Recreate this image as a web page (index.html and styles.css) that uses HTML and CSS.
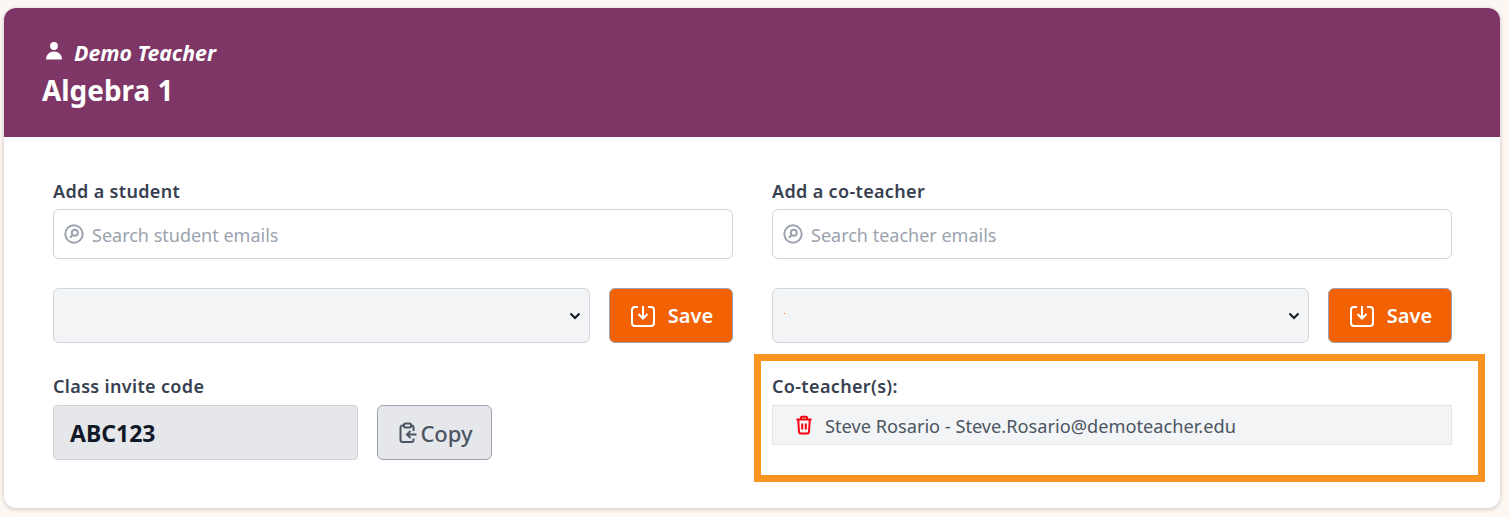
FILE: index.html
```html
<!DOCTYPE html>
<html lang="en">
<head>
<meta charset="utf-8">
<title>Algebra 1</title>
<link rel="stylesheet" href="styles.css">
</head>
<body>
<main class="card">
  <header class="card-head">
    <div class="teacher">
      <svg class="person" viewBox="0 0 20 20" aria-hidden="true"><circle cx="10" cy="5" r="3.900" fill="currentColor"/><path d="M2 18.500c0-5 3.600-8 8-8s8 3 8 8z" fill="currentColor"/></svg>
      <span>Demo Teacher</span>
    </div>
    <h1 class="class-name">Algebra 1</h1>
  </header>
  <div class="card-body">
    <section class="col">
      <label class="label">Add a student</label>
      <div class="search">
        <svg class="search-icon" viewBox="0 0 20 20" aria-hidden="true"><circle cx="10" cy="10" r="8.700"/><circle cx="10.800" cy="8.800" r="3"/><path d="M8.600 11 6 13.700"/></svg>
        <span>Search student emails</span>
      </div>
      <div class="pick-row">
        <div class="select"><svg class="chev" viewBox="0 0 12 8" aria-hidden="true"><path d="M1.500 1.500 6 6l4.500-4.500"/></svg></div>
        <button class="save">
          <svg class="save-icon" viewBox="0 0 26 24" aria-hidden="true"><path d="M8 3H5a3 3 0 0 0-3 3v13a3 3 0 0 0 3 3h16a3 3 0 0 0 3-3V6a3 3 0 0 0-3-3h-3"/><path d="M13 2v12M8.500 10l4.500 4.500 4.500-4.500"/></svg>
          <span>Save</span>
        </button>
      </div>
      <label class="label invite-label">Class invite code</label>
      <div class="invite-row">
        <div class="code">ABC123</div>
        <button class="copy">
          <svg class="copy-icon" viewBox="0 0 20 22" aria-hidden="true"><path d="M6 3.500H4.500a2 2 0 0 0-2 2V18a2 2 0 0 0 2 2h9a2 2 0 0 0 2-2v-1.500M13 3.500h.500a2 2 0 0 1 2 2V9"/><rect x="6" y="1.500" width="7" height="4" rx="1.500"/><path d="M18.500 12.500H9M12.500 9 9 12.500l3.500 3.500"/></svg>
          <span>Copy</span>
        </button>
      </div>
    </section>
    <section class="col">
      <label class="label">Add a co-teacher</label>
      <div class="search">
        <svg class="search-icon" viewBox="0 0 20 20" aria-hidden="true"><circle cx="10" cy="10" r="8.700"/><circle cx="10.800" cy="8.800" r="3"/><path d="M8.600 11 6 13.700"/></svg>
        <span>Search teacher emails</span>
      </div>
      <div class="pick-row">
        <div class="select"><i class="dot"></i><svg class="chev" viewBox="0 0 12 8" aria-hidden="true"><path d="M1.500 1.500 6 6l4.500-4.500"/></svg></div>
        <button class="save">
          <svg class="save-icon" viewBox="0 0 26 24" aria-hidden="true"><path d="M8 3H5a3 3 0 0 0-3 3v13a3 3 0 0 0 3 3h16a3 3 0 0 0 3-3V6a3 3 0 0 0-3-3h-3"/><path d="M13 2v12M8.500 10l4.500 4.500 4.500-4.500"/></svg>
          <span>Save</span>
        </button>
      </div>
      <label class="label invite-label">Co-teacher(s):</label>
      <div class="co-row">
        <svg class="trash" viewBox="0 0 18 20" aria-hidden="true"><path d="M1.500 4.500h15M6 4.500V2.700a1 1 0 0 1 1-1h4a1 1 0 0 1 1 1v1.800M3.200 4.500 4 17a1.800 1.800 0 0 0 1.800 1.500h6.400A1.800 1.800 0 0 0 14 17l.8-12.500M7.200 8.500v6M10.800 8.500v6"/></svg>
        <span class="co-text">Steve Rosario - Steve.Rosario@demoteacher.edu</span>
      </div>
    </section>
    <div class="highlight"></div>
  </div>
</main>
</body>
</html>
```
FILE: styles.css
```css
* { box-sizing: border-box; }
html, body { height: 100%; }
body {
  margin: 0;
  padding: 8px 9px 0 4px;
  background: #fdf7f4;
  font-family: "Noto Sans", "Open Sans", sans-serif;
  color: #374151;
  overflow: hidden;
}
.card {
  width: 1496px;
  height: 500px;
  background: #fff;
  border-radius: 12px;
  box-shadow: 0 1px 4px rgba(0, 0, 0, .22);
  overflow: hidden;
}
.card-head {
  height: 129px;
  background: #7e3667;
  color: #fff;
  padding: 29px 38px 0;
}
.teacher {
  display: flex;
  align-items: center;
  gap: 10px;
  height: 30px;
  padding-left: 2px;
  font-size: 21.300px;
  font-weight: 700;
  font-style: italic;
}
.person { width: 20px; height: 20px; margin-top: -3px; }
.class-name {
  margin: 5px 0 0;
  font-size: 27.900px;
  line-height: 36px;
  font-weight: 700;
}
.card-body {
  position: relative;
  display: grid;
  grid-template-columns: 680px 680px;
  column-gap: 39px;
  padding: 40px 49px 0;
}
.col { min-width: 0; }
.label {
  display: block;
  height: 32px;
  font-size: 18px;
  line-height: 28px;
  font-weight: 600;
  letter-spacing: .34px;
  color: #374151;
}
.search {
  display: flex;
  align-items: center;
  gap: 8px;
  height: 50px;
  padding: 2px 0 0 10px;
  border: 1px solid #d1d5db;
  border-radius: 6px;
  background: #fff;
  font-size: 18px;
  color: #9ca3af;
}
.search-icon {
  width: 20px;
  height: 20px;
  margin-top: -3px;
  fill: none;
  stroke: #9ca3af;
  stroke-width: 2;
}
.pick-row {
  display: flex;
  gap: 19px;
  margin-top: 29px;
}
.select {
  position: relative;
  flex: 1;
  height: 55px;
  background: #f3f4f6;
  border: 1px solid #d1d5db;
  border-radius: 6px;
}
.chev {
  position: absolute;
  right: 8px;
  top: 23px;
  width: 12px;
  height: 8px;
  fill: none;
  stroke: #111827;
  stroke-width: 2;
}
.dot {
  position: absolute;
  left: 11px;
  top: 24px;
  width: 1px;
  height: 1px;
  background: #f97316;
}
.save {
  display: flex;
  align-items: center;
  justify-content: center;
  gap: 12px;
  width: 124px;
  height: 55px;
  padding: 0 0 0 1px;
  background: #f26205;
  border: 1px solid #9ca3af;
  border-radius: 6px;
  color: #fff;
  font: 600 20px "Noto Sans", sans-serif;
}
.save-icon {
  width: 26px;
  height: 24px;
  fill: none;
  stroke: #fff;
  stroke-width: 2;
}
.invite-label { margin-top: 29px; height: 33px; }
.invite-row { display: flex; gap: 19px; }
.code {
  display: flex;
  align-items: center;
  width: 305px;
  height: 55px;
  padding: 0 0 0 16px;
  background: #e5e7eb;
  border: 1px solid #d1d5db;
  border-radius: 4px;
  font: 700 23px "Noto Sans", sans-serif;
  color: #111827;
}
.copy {
  display: flex;
  align-items: center;
  justify-content: center;
  gap: 2px;
  width: 115px;
  height: 55px;
  padding: 0 0 0 2px;
  background: #e5e7eb;
  border: 1px solid #9ca3af;
  border-radius: 6px;
  color: #4b5563;
  font: 500 22px "Noto Sans", sans-serif;
}
.copy-icon {
  width: 20px;
  height: 22px;
  fill: none;
  stroke: #4b5563;
  stroke-width: 2;
}
.co-row {
  display: flex;
  align-items: center;
  gap: 12px;
  height: 40px;
  padding-left: 22px;
  background: #f3f4f6;
  border: 1px solid #e5e7eb;
  font-size: 18.200px;
  color: #4b5563;
}
.co-text { padding-top: 1px; }
.trash {
  width: 18px;
  height: 20px;
  margin-top: -1px;
  fill: none;
  stroke: #f5000f;
  stroke-width: 2;
}
.highlight {
  position: absolute;
  left: 750px;
  top: 217px;
  width: 731px;
  height: 128px;
  border: 7px solid #f9951f;
  pointer-events: none;
}
```
